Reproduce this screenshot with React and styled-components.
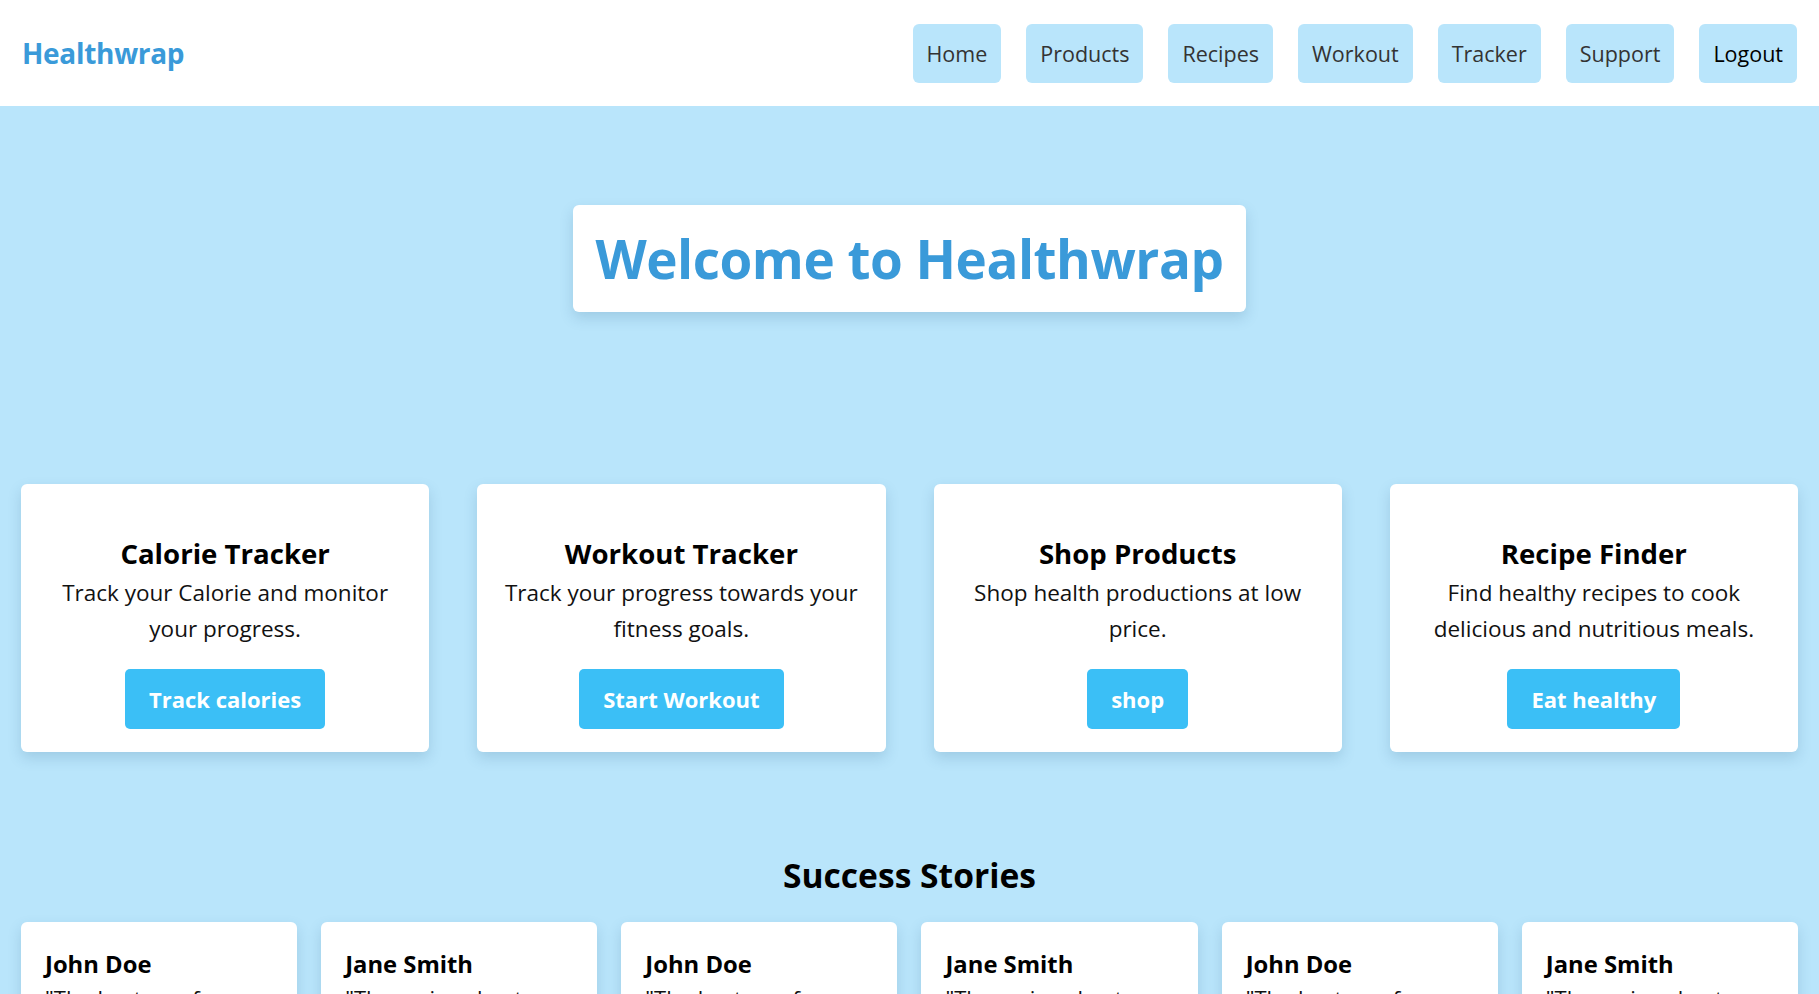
import React from "react";
import styled, { createGlobalStyle } from "styled-components";

const GlobalStyle = createGlobalStyle`
  body {
    margin: 0;
    font-family: "Open Sans", "Noto Sans", sans-serif;
    background: #b9e5fb;
    color: #111;
  }
`;

const Navbar = styled.header`
  height: 106px;
  box-sizing: border-box;
  padding: 0 22px;
  display: flex;
  align-items: center;
  justify-content: space-between;
  background: #ffffff;
`;

const Logo = styled.div`
  font-size: 28px;
  font-weight: 700;
  color: #3a9ad9;
  letter-spacing: -0.3px;
`;

const NavList = styled.nav`
  display: flex;
  gap: 25px;
`;

const NavButton = styled.a`
  display: block;
  padding: 13px 14px;
  line-height: 33px;
  font-size: 21.5px;
  background: #b9e5fb;
  border-radius: 6px;
  color: ${({ $strong }) => ($strong ? "#000" : "#333")};
  text-decoration: none;
`;

const Main = styled.main`
  padding: 99px 21px 40px;
`;

const Hero = styled.section`
  display: flex;
  justify-content: center;
`;

const HeroCard = styled.div`
  background: #fff;
  border-radius: 6px;
  padding: 16px 23px;
  box-shadow: 0 6px 14px rgba(40, 90, 130, 0.18);

  h1 {
    margin: 0;
    font-size: 53px;
    line-height: 75px;
    font-weight: 700;
    color: #3a9ad9;
    letter-spacing: -0.5px;
  }
`;

const Features = styled.section`
  margin-top: 172px;
  display: grid;
  grid-template-columns: repeat(4, 1fr);
  gap: 48px;
`;

const FeatureCard = styled.div`
  background: #fff;
  border-radius: 6px;
  padding: 49px 20px 23px;
  text-align: center;
  box-shadow: 0 6px 14px rgba(40, 90, 130, 0.18);

  h2 {
    margin: 0;
    font-size: 27.6px;
    line-height: 40px;
    font-weight: 700;
    color: #000;
  }

  p {
    margin: 2px 0 0;
    font-size: 22.5px;
    line-height: 36px;
    color: #111;
  }
`;

const ActionButton = styled.button`
  margin-top: 22px;
  padding: 15px 24px;
  border: none;
  border-radius: 5px;
  background: #3bbff6;
  color: #fff;
  font-family: inherit;
  font-size: 22px;
  font-weight: 700;
  line-height: 30px;
  cursor: pointer;
`;

const SectionTitle = styled.h2`
  margin: 98px 0 22px;
  text-align: center;
  font-size: 33.6px;
  line-height: 50px;
  font-weight: 700;
  color: #000;
`;

const Stories = styled.section`
  display: grid;
  grid-template-columns: repeat(6, 1fr);
  gap: 24px;
`;

const StoryCard = styled.div`
  background: #fff;
  border-radius: 6px;
  padding: 25px 24px 24px;
  box-shadow: 0 6px 14px rgba(40, 90, 130, 0.18);

  h3 {
    margin: 0;
    font-size: 23.8px;
    line-height: 34px;
    font-weight: 700;
    color: #000;
  }

  p {
    margin: 0;
    font-size: 22px;
    line-height: 34px;
  }
`;

const links = ["Home", "Products", "Recipes", "Workout", "Tracker", "Support"];

const features = [
  {
    title: "Calorie Tracker",
    text: "Track your Calorie and monitor your progress.",
    action: "Track calories",
  },
  {
    title: "Workout Tracker",
    text: "Track your progress towards your fitness goals.",
    action: "Start Workout",
  },
  {
    title: "Shop Products",
    text: "Shop health productions at low price.",
    action: "shop",
  },
  {
    title: "Recipe Finder",
    text: "Find healthy recipes to cook delicious and nutritious meals.",
    action: "Eat healthy",
  },
];

const storyA = {
  name: "John Doe",
  quote: "\"The best app for tracking my health goals!\"",
};
const storyB = {
  name: "Jane Smith",
  quote: "\"The recipes kept me on track every day.\"",
};
const stories = [storyA, storyB, storyA, storyB, storyA, storyB];

const App = () => {
  return (
    <>
      <GlobalStyle />
      <Navbar>
        <Logo>Healthwrap</Logo>
        <NavList>
          {links.map((l) => (
            <NavButton key={l} href="#">
              {l}
            </NavButton>
          ))}
          <NavButton href="#" $strong>
            Logout
          </NavButton>
        </NavList>
      </Navbar>

      <Main>
        <Hero>
          <HeroCard>
            <h1>Welcome to Healthwrap</h1>
          </HeroCard>
        </Hero>

        <Features>
          {features.map((f) => (
            <FeatureCard key={f.title}>
              <h2>{f.title}</h2>
              <p>{f.text}</p>
              <ActionButton>{f.action}</ActionButton>
            </FeatureCard>
          ))}
        </Features>

        <SectionTitle>Success Stories</SectionTitle>
        <Stories>
          {stories.map((s, i) => (
            <StoryCard key={i}>
              <h3>{s.name}</h3>
              <p>{s.quote}</p>
            </StoryCard>
          ))}
        </Stories>
      </Main>
    </>
  );
};

export default App;
